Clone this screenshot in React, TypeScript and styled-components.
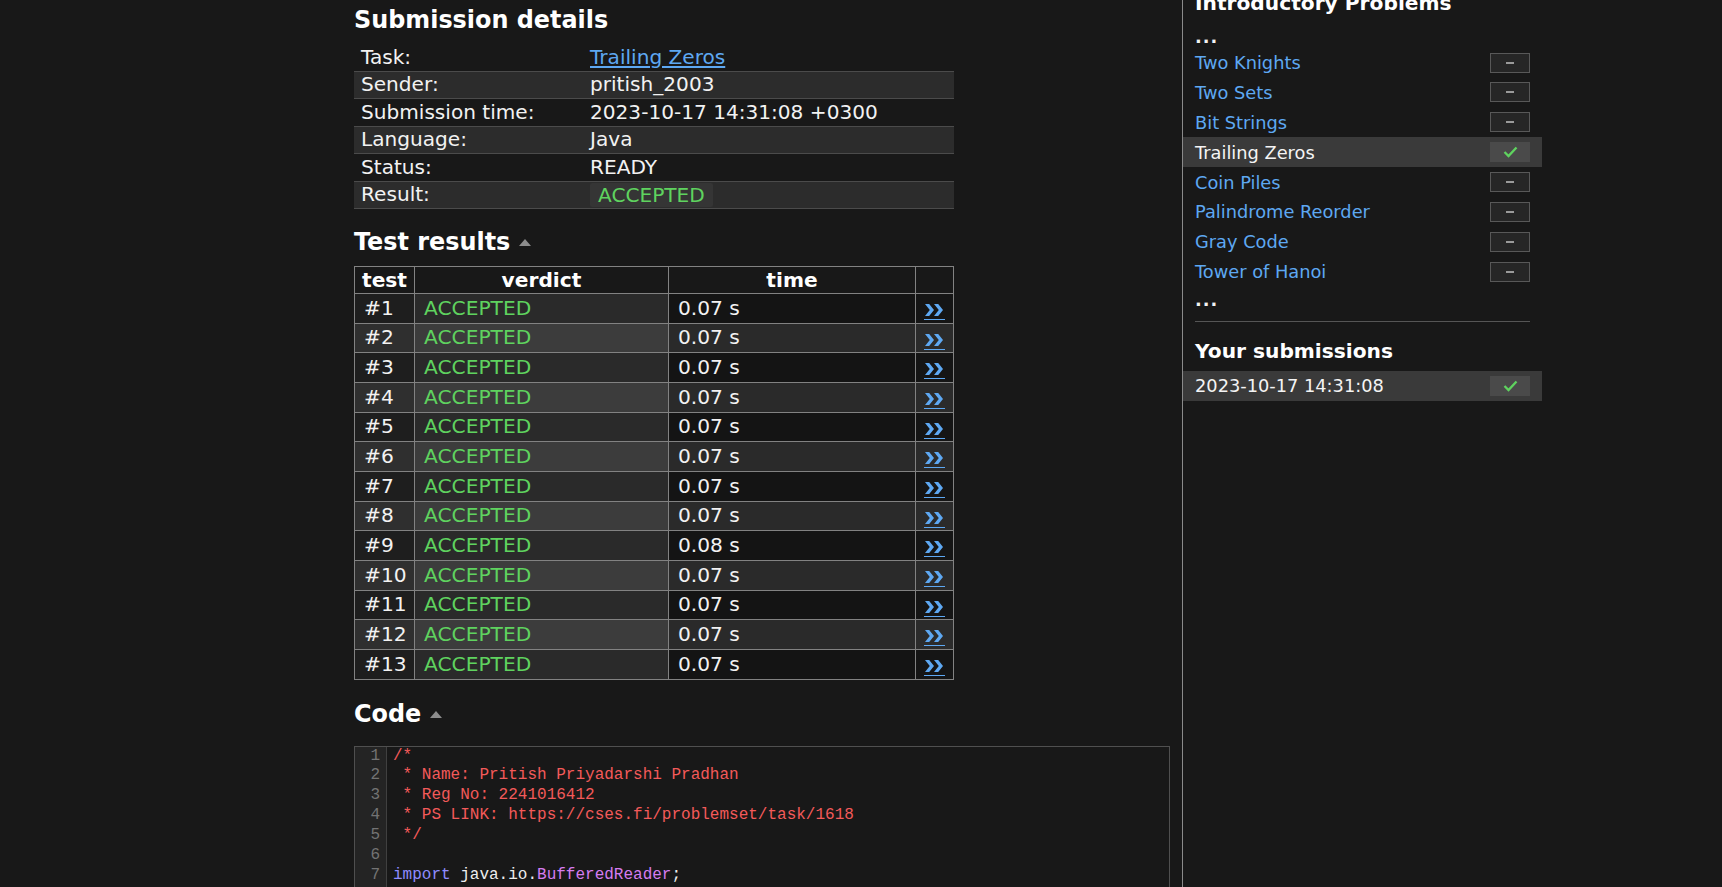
import React from "react";
import styled, { createGlobalStyle } from "styled-components";

const GlobalStyle = createGlobalStyle`
  html, body {
    margin: 0;
    padding: 0;
    background: #181818;
    overflow: hidden;
  }
  body {
    font-family: "DejaVu Sans", Verdana, sans-serif;
    color: #f2f2f2;
  }
  #root {
    height: 887px;
    overflow: hidden;
  }
`;

const Page = styled.div`
  display: flex;
  align-items: stretch;
  margin-top: -40px;
  padding-left: 354px;
  min-height: 1000px;
`;

const Main = styled.main`
  flex: none;
  width: 816px;
  margin-right: 12px;
  padding-top: 46px;
`;

const Sidebar = styled.aside`
  flex: none;
  width: 359px;
  border-left: 1px solid #8a8a8a;
  padding-top: 31px;
  font-size: 17.8px;
`;

const Heading = styled.h2<{ $top?: number; $bottom?: number }>`
  display: flex;
  align-items: center;
  gap: 9px;
  margin: ${(p) => p.$top ?? 0}px 0 ${(p) => p.$bottom ?? 0}px;
  font-size: 23.9px;
  line-height: 28px;
  font-weight: bold;
  color: #ffffff;
`;

const Caret = styled.span`
  width: 0;
  height: 0;
  border-left: 6.5px solid transparent;
  border-right: 6.5px solid transparent;
  border-bottom: 7px solid #8c8c8c;
  margin-top: 1px;
`;

const DetailsTable = styled.table`
  width: 600px;
  border-collapse: collapse;
  font-size: 20.1px;
`;

const DetailRow = styled.tr<{ $alt: boolean }>`
  height: 27.5px;
  background: ${(p) => (p.$alt ? "#2c2c2c" : "transparent")};
  border-bottom: 1px solid #4b4b4b;
`;

const DetailLabel = styled.td`
  width: 215px;
  padding: 0 7px;
  line-height: 23px;
  white-space: nowrap;
`;

const DetailValue = styled.td`
  padding: 0 7px;
  line-height: 23px;
  white-space: nowrap;
`;

const Link = styled.a`
  color: #5ea8f2;
  text-decoration: underline;
  text-underline-offset: 2px;
  cursor: pointer;
`;

const ResultBadge = styled.span`
  display: inline-block;
  padding: 0 8px;
  line-height: 24px;
  border-radius: 2px;
  background: #353535;
  color: #5fd35f;
`;

const ResultsTable = styled.table`
  width: 599px;
  border-collapse: collapse;
  table-layout: fixed;
  font-size: 20.2px;
`;

const HeadCell = styled.th<{ $w: number }>`
  width: ${(p) => p.$w}px;
  height: 26px;
  padding: 0;
  border: 1px solid #828282;
  text-align: center;
  font-weight: bold;
  line-height: 23px;
  color: #ffffff;
`;

const cellBg: Record<string, [string, string]> = {
  test: ["#1e1e1e", "#2f2f2f"],
  verdict: ["#2a2a2a", "#3c3c3c"],
  time: ["#141414", "#2a2a2a"],
  link: ["#151515", "#2b2b2b"],
};

const Cell = styled.td<{ $kind: string; $alt: boolean }>`
  height: 28.66px;
  padding: 0 0 0 ${(p) => (p.$kind === "link" ? 8 : 9)}px;
  border: 1px solid #828282;
  background: ${(p) => cellBg[p.$kind][p.$alt ? 1 : 0]};
  color: ${(p) => (p.$kind === "verdict" ? "#5fd35f" : "#f2f2f2")};
  line-height: 23px;
  white-space: nowrap;
  vertical-align: ${(p) => (p.$kind === "link" ? "top" : "middle")};
`;

const MoreLink = styled.a`
  display: flex;
  width: fit-content;
  margin-top: 10px;
  padding: 0 1px 3px;
  border-bottom: 1.5px solid #5ea8f2;
  color: #5ea8f2;
  line-height: 0;
  cursor: pointer;
`;

const Chevrons = () => (
  <svg width="19" height="12" viewBox="0 0 19 12" aria-hidden="true">
    <polygon points="0,0 4.2,0 9,6 4.2,12 0,12 4.8,6" fill="currentColor" />
    <polygon points="9,0 13.2,0 18,6 13.2,12 9,12 13.8,6" fill="currentColor" />
  </svg>
);

const CodeBox = styled.div`
  display: flex;
  width: 816px;
  box-sizing: border-box;
  border: 1px solid #4f4f4f;
  font-family: "Liberation Mono", "DejaVu Sans Mono", monospace;
  font-size: 16px;
  line-height: 19.9px;
`;

const Gutter = styled.div`
  flex: none;
  width: 25px;
  padding-right: 6px;
  padding-bottom: 60px;
  background: #242424;
  border-right: 1px solid #404040;
  color: #737373;
  text-align: right;
`;

const CodeBody = styled.div`
  flex: 1;
  padding-left: 6px;
`;

const CodeLine = styled.div`
  height: 19.9px;
  white-space: pre;
`;

const tokenColors: Record<string, string> = {
  comment: "#f35a5a",
  keyword: "#8f8cff",
  type: "#d57cf0",
  plain: "#eeeeee",
};

const Token = styled.span<{ $kind: string }>`
  color: ${(p) => tokenColors[p.$kind]};
`;

const SideHeading = styled.h3<{ $top?: number; $bottom?: number }>`
  margin: ${(p) => p.$top ?? 0}px 12px ${(p) => p.$bottom ?? 0}px;
  font-size: 20.2px;
  line-height: 24px;
  font-weight: bold;
  color: #ffffff;
`;

const Ellipsis = styled.div`
  padding: 2px 12px 0;
  box-sizing: border-box;
  line-height: 22px;
  height: 24px;
  letter-spacing: 1px;
  font-weight: bold;
  color: #f2f2f2;
`;

const TaskRow = styled.div<{ $active?: boolean }>`
  display: flex;
  align-items: center;
  justify-content: space-between;
  height: 29.9px;
  padding: 0 12px;
  background: ${(p) => (p.$active ? "#3a3a3a" : "transparent")};
  color: ${(p) => (p.$active ? "#f4f4f4" : "#5ea8f2")};
  white-space: nowrap;
`;

const StatusBox = styled.span<{ $done?: boolean }>`
  display: flex;
  align-items: center;
  justify-content: center;
  width: 40px;
  height: 20px;
  box-sizing: border-box;
  border: 1px solid ${(p) => (p.$done ? "#4a4a4a" : "#585858")};
  background: ${(p) => (p.$done ? "#4a4a4a" : "#262626")};
`;

const Dash = styled.span`
  width: 8px;
  height: 2px;
  background: #9a9a9a;
`;

const Divider = styled.hr`
  margin: 10px 12px 0;
  border: none;
  border-top: 1px solid #555555;
`;

const Check = () => (
  <svg width="15" height="12" viewBox="0 0 15 12" aria-hidden="true">
    <polyline points="1.5,6 5.5,10 13.5,1.5" fill="none" stroke="#5fd35f" strokeWidth="2.3" />
  </svg>
);

const details: [string, React.ReactNode][] = [
  ["Task:", <Link key="l">Trailing Zeros</Link>],
  ["Sender:", "pritish_2003"],
  ["Submission time:", "2023-10-17 14:31:08 +0300"],
  ["Language:", "Java"],
  ["Status:", "READY"],
  ["Result:", <ResultBadge key="r">ACCEPTED</ResultBadge>],
];

const tests = Array.from({ length: 13 }, (_, i) => ({
  id: i + 1,
  time: i === 8 ? "0.08 s" : "0.07 s",
}));

type Tok = { t: string; k: string };
const codeLines: Tok[][] = [
  [{ t: "/*", k: "comment" }],
  [{ t: " * Name: Pritish Priyadarshi Pradhan", k: "comment" }],
  [{ t: " * Reg No: 2241016412", k: "comment" }],
  [{ t: " * PS LINK: https://cses.fi/problemset/task/1618", k: "comment" }],
  [{ t: " */", k: "comment" }],
  [],
  [
    { t: "import", k: "keyword" },
    { t: " java.io.", k: "plain" },
    { t: "BufferedReader", k: "type" },
    { t: ";", k: "plain" },
  ],
];

const problems = [
  "Two Knights",
  "Two Sets",
  "Bit Strings",
  "Trailing Zeros",
  "Coin Piles",
  "Palindrome Reorder",
  "Gray Code",
  "Tower of Hanoi",
];

export default function App() {
  return (
    <>
      <GlobalStyle />
      <Page>
        <Main>
          <Heading $bottom={9.5}>Submission details</Heading>
          <DetailsTable>
            <tbody>
              {details.map(([label, value], i) => (
                <DetailRow key={label} $alt={i % 2 === 1}>
                  <DetailLabel>{label}</DetailLabel>
                  <DetailValue>{value}</DetailValue>
                </DetailRow>
              ))}
            </tbody>
          </DetailsTable>

          <Heading $top={19} $bottom={10}>
            Test results <Caret />
          </Heading>
          <ResultsTable>
            <thead>
              <tr>
                <HeadCell $w={59}>test</HeadCell>
                <HeadCell $w={253}>verdict</HeadCell>
                <HeadCell $w={246}>time</HeadCell>
                <HeadCell $w={37}></HeadCell>
              </tr>
            </thead>
            <tbody>
              {tests.map((t) => {
                const alt = t.id % 2 === 0;
                return (
                  <tr key={t.id}>
                    <Cell $kind="test" $alt={alt}>#{t.id}</Cell>
                    <Cell $kind="verdict" $alt={alt}>ACCEPTED</Cell>
                    <Cell $kind="time" $alt={alt}>{t.time}</Cell>
                    <Cell $kind="link" $alt={alt}>
                      <MoreLink aria-label={`test ${t.id} details`}>
                        <Chevrons />
                      </MoreLink>
                    </Cell>
                  </tr>
                );
              })}
            </tbody>
          </ResultsTable>

          <Heading $top={20} $bottom={18}>
            Code <Caret />
          </Heading>
          <CodeBox>
            <Gutter>
              {codeLines.map((_, i) => (
                <CodeLine key={i}>{i + 1}</CodeLine>
              ))}
            </Gutter>
            <CodeBody>
              {codeLines.map((line, i) => (
                <CodeLine key={i}>
                  {line.map((tok, j) => (
                    <Token key={j} $kind={tok.k}>
                      {tok.t}
                    </Token>
                  ))}
                </CodeLine>
              ))}
            </CodeBody>
          </CodeBox>
        </Main>

        <Sidebar>
          <SideHeading $bottom={8.6}>Introductory Problems</SideHeading>
          <Ellipsis>...</Ellipsis>
          {problems.map((p) => {
            const active = p === "Trailing Zeros";
            return (
              <TaskRow key={p} $active={active}>
                <span>{p}</span>
                <StatusBox $done={active}>{active ? <Check /> : <Dash />}</StatusBox>
              </TaskRow>
            );
          })}
          <Ellipsis>...</Ellipsis>
          <Divider />
          <SideHeading $top={17} $bottom={8}>
            Your submissions
          </SideHeading>
          <TaskRow $active>
            <span>2023-10-17 14:31:08</span>
            <StatusBox $done>
              <Check />
            </StatusBox>
          </TaskRow>
        </Sidebar>
      </Page>
    </>
  );
}
